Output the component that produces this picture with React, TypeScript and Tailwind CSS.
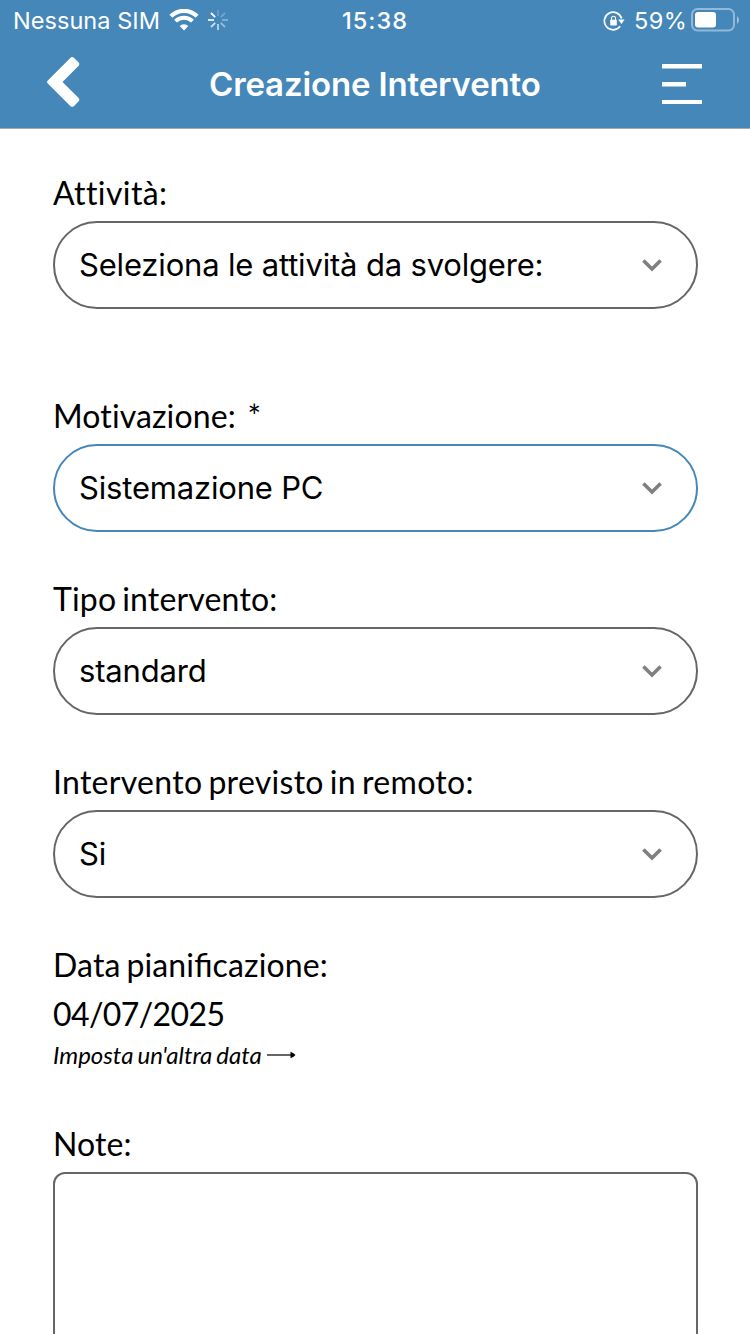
import React from 'react';

const LATO = "font-['Lato',sans-serif]";

function StatusBar() {
  return (
    <div className="grid h-10 grid-cols-[342px_261px_1fr] grid-rows-[40px] font-['Inter',sans-serif] text-[23.5px]">
      <div className="flex h-10 items-center pl-[13px]">
        <span className="mt-[2px] w-[156px] whitespace-nowrap leading-[30px] tracking-[0.05px] font-[370]">Nessuna SIM</span>
        <svg width="30" height="22" viewBox="0 0 30 22" fill="none" className="shrink-0">
          <path d="M1.9 7.3a18.5 18.5 0 0 1 26.2 0" stroke="white" strokeWidth="4.2" />
          <path d="M6.5 12.2a12 12 0 0 1 17 0" stroke="white" strokeWidth="4" />
          <path d="M15 21.4l-4.3-4.5a6.2 6.2 0 0 1 8.6 0z" fill="white" />
        </svg>
        <svg width="20" height="20" viewBox="0 0 20 20" stroke="white" strokeWidth="1.8" className="ml-[9px] shrink-0">
          <path d="M10 0v6" opacity=".2" />
          <path d="M17 3l-4.2 4.2" opacity=".25" />
          <path d="M14 10h6" opacity=".35" />
          <path d="M12.8 12.8L17 17" opacity=".45" />
          <path d="M10 14v6" opacity=".65" />
          <path d="M7.2 12.8L3 17" opacity=".75" />
          <path d="M0 10h6" opacity=".9" />
          <path d="M3 3l4.2 4.2" />
        </svg>
      </div>
      <span className="whitespace-nowrap pt-px font-medium leading-10 tracking-[1px]">15:38</span>
      <div className="flex h-10 items-center">
        <svg width="22" height="20" viewBox="0 0 22 20" fill="none" className="mt-px shrink-0">
          <path d="M18.6 7.5A8.8 8.8 0 1 0 17.2 15.3" stroke="white" strokeWidth="1.7" />
          <path d="M15.2 8.4h6.4l-3.1 4.6z" fill="white" />
          <rect x="7.2" y="8.8" width="6.6" height="5.6" rx=".7" fill="white" />
          <path d="M8.5 9V7.2a2 2 0 0 1 4 0V9" stroke="white" strokeWidth="1.1" />
        </svg>
        <span className="ml-[9px] mt-[2px] w-[57px] whitespace-nowrap leading-[30px] tracking-[0.5px] font-[370]">59%</span>
        <svg width="49" height="24" viewBox="0 0 49 24" fill="none" className="shrink-0">
          <rect x="1" y="1" width="42" height="21.5" rx="5.5" stroke="white" strokeOpacity=".42" strokeWidth="2" />
          <rect x="4" y="4" width="21" height="15.5" rx="3" fill="white" />
          <path d="M46 8q2 1.6 2 4t-2 4z" fill="white" fillOpacity=".5" />
        </svg>
      </div>
    </div>
  );
}

function Header() {
  return (
    <header className="h-[129px] border-b border-[#a3a9ad] bg-[#4587b9] text-white">
      <StatusBar />
      <div className="flex h-[88px] items-center pl-[46px] pr-12">
        <svg width="34" height="52" viewBox="0 0 34 52" fill="white" className="mb-1">
          <path d="M1.8 24.4L24.3 1.9a2.7 2.7 0 0 1 3.8 0l4.3 4.3a2.7 2.7 0 0 1 0 3.8L16.5 25.9l15.9 15.9a2.7 2.7 0 0 1 0 3.8l-4.3 4.3a2.7 2.7 0 0 1-3.8 0L1.8 27.4a2.1 2.1 0 0 1 0-3z" />
        </svg>
        <h1 className="ml-[129px] whitespace-nowrap font-['Inter',sans-serif] text-[33px] font-[580] leading-[88px] tracking-[-0.14px]">
          Creazione Intervento
        </h1>
        <svg width="40" height="40" viewBox="0 0 40 40" fill="white" className="ml-auto">
          <path d="M0 0h40v4.5H0zM0 18h24v4.5H0zM0 36h40v4H0z" />
        </svg>
      </div>
    </header>
  );
}

function Label({ children, className = '' }: { children: React.ReactNode; className?: string }) {
  return (
    <div className={`${LATO} h-[38px] whitespace-pre text-[32px] leading-[40px] [word-spacing:-2.4px] ${className}`}>
      {children}
    </div>
  );
}

type FieldProps = { label: string; value: string; labelClass: string; active?: boolean };

function SelectField({ label, value, labelClass, active }: FieldProps) {
  return (
    <div>
      <Label className={labelClass}>{label}</Label>
      <button
        className={`mt-[10px] flex h-[88px] w-full items-center justify-between rounded-full border-2 pl-[24px] pr-[34px] ${
          active ? 'border-[#4587b9]' : 'border-[#666666]'
        }`}
      >
        <span className="whitespace-nowrap font-['Inter',sans-serif] text-[31px] leading-[40px] tracking-[-0.18px] [font-feature-settings:'calt'_0]">
          {value}
        </span>
        <svg width="20" height="14" viewBox="0 0 20 14" fill="none" stroke="#808080" strokeWidth="3.6">
          <path d="M1.4 2.4L10 11l8.6-8.6" />
        </svg>
      </button>
    </div>
  );
}

export default function App() {
  return (
    <div className="h-[1334px] w-[750px] overflow-hidden bg-white text-black">
      <Header />
      <main className="flex flex-col pl-[53px] pr-[52px] pt-11">
        <SelectField label="Attività:" value="Seleziona le attività da svolgere:" labelClass="tracking-[0.4px]" />
        <div className="mt-[87px] flex flex-col gap-[47px]">
          <SelectField label="Motivazione:  *" value="Sistemazione PC" labelClass="tracking-[0.12px]" active />
          <SelectField label="Tipo intervento:" value="standard" labelClass="tracking-[0.17px]" />
          <SelectField label="Intervento previsto in remoto:" value="Si" labelClass="tracking-[0.29px]" />
          <div>
            <Label className="tracking-[0.13px] [font-feature-settings:'liga'_1]">Data pianificazione:</Label>
            <div className={`${LATO} mt-[11px] h-[38px] text-[32px] leading-[40px] tracking-[-0.6px]`}>04/07/2025</div>
            <div className="mt-2 flex h-[29px] items-center">
              <span className={`${LATO} whitespace-nowrap text-[24px] italic leading-[29px] [word-spacing:-1.6px]`}>
                Imposta un'altra data
              </span>
              <svg width="29" height="8" viewBox="0 0 29 8" className="ml-[5px]">
                <path d="M0 4h24" stroke="#555" strokeWidth="1.8" />
                <path d="M23.5 .8q3.6 1.4 5 3.2q-1.4 1.8-5 3.2z" fill="black" />
              </svg>
            </div>
          </div>
        </div>
        <div className="mt-[55px]">
          <Label className="tracking-[0.1px]">Note:</Label>
          <div className="mt-[10px] h-[240px] rounded-xl border-2 border-[#666666]" />
        </div>
      </main>
    </div>
  );
}
